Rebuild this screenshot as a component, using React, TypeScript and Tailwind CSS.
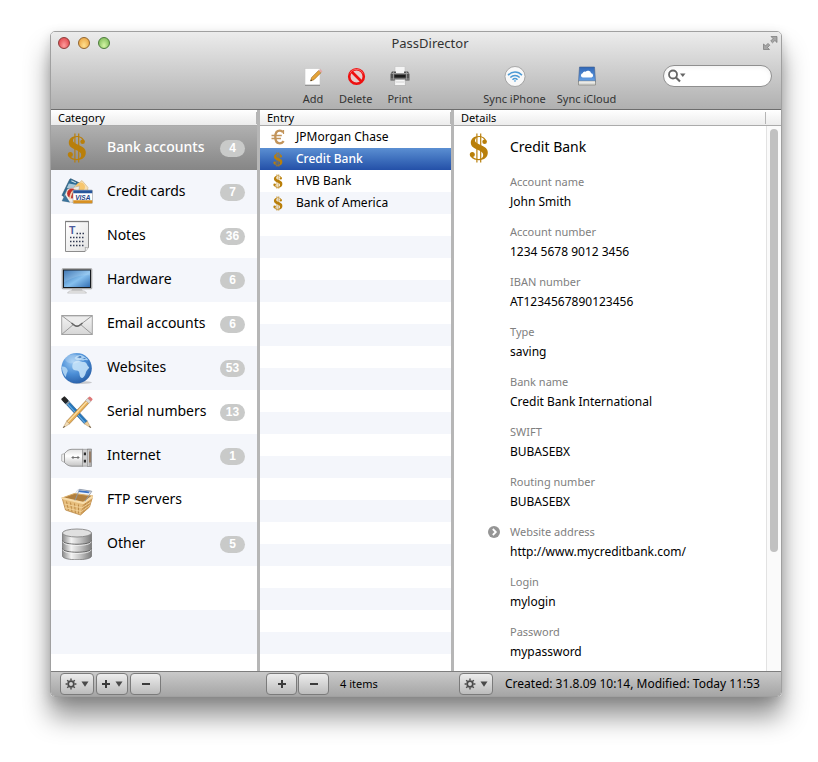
import { useState } from 'react';
import type { ReactNode } from 'react';

function DollarIcon({ className }: { className?: string }) {
  return (
    <svg viewBox="0 0 20 30" className={className} fill="#b97f0a" aria-hidden="true">
      <path d="M17.6 9C17 5.2 13.8 3 10 3 5.2 3 1.8 5.8 1.8 9.6c0 4 2.8 5.6 7.2 7.4 3.6 1.6 5.2 2.6 5.2 5s-1.800 4-4.600 4c-3 0-5.800-1.400-7-4H1.200c.8 3.400 4.200 5.200 8.600 5.200 5.600 0 9-3 9-7.400 0-4.200-2.800-6-7.200-7.800C7.600 10.400 6 9.600 6 7.600c0-2.200 1.800-3.500 4.200-3.500 2.800 0 4.800 1.500 5.800 3.900z" />
      <circle cx="15.600" cy="8.800" r="2.300" />
      <circle cx="3.300" cy="21.400" r="2.500" />
      <path d="M7.300 .5h1.200v29H7.300zM11.100 .5h1.200v29h-1.200z" />
    </svg>
  );
}

function EuroIcon({ className }: { className?: string }) {
  return (
    <svg viewBox="0 0 14 16" className={className} fill="none" stroke="#c2945a" aria-hidden="true">
      <path d="M12 3.400C11.200 2.200 10.200 1.700 8.800 1.700 5.800 1.700 4.300 4.300 4.300 8s1.500 6.300 4.500 6.300c1.600 0 2.900-.7 3.900-2.200" strokeWidth="2.300" />
      <path d="M.5 6.500h10.300M.5 9.500h9.500" strokeWidth="1.500" />
      <path d="M12.500 1v4" strokeWidth="1.200" />
    </svg>
  );
}

function CardsIcon() {
  return (
    <svg viewBox="0 0 32 32" className="size-8" aria-hidden="true">
      <g transform="rotate(26 12 15)">
        <rect x="4" y="5" width="13" height="19" rx="1" fill="#2f6d94" stroke="#1f4a68" strokeWidth=".6" />
        <path d="M5 10l11-3v4L5 15z" fill="#a9c7d8" />
        <path d="M6 6.500h5" stroke="#d5e4ec" strokeWidth="1" />
      </g>
      <path d="M13 11l8-6.500 6 7-1 6H13z" fill="#f6dfb4" stroke="#c9a05c" strokeWidth=".5" />
      <circle cx="19.500" cy="11" r="4.500" fill="#f7c66d" />
      <path d="M1 25l5.500-12 12-3-3 17z" fill="#f0ece6" stroke="#999" strokeWidth=".4" />
      <circle cx="11" cy="17.500" r="4.900" fill="#c3312b" />
      <path d="M9 23c.5-6 2-8.500 6-9.500" stroke="#f2d5b0" strokeWidth="1.800" fill="none" />
      <path d="M1 25l3-6.500 5 8z" fill="#3b739b" />
      <rect x="12" y="14" width="19.500" height="13.500" rx="1" fill="#fff" stroke="#8b8b8b" strokeWidth=".5" />
      <path d="M12.300 14.300h19v3h-19z" fill="#26559a" />
      <path d="M12.300 24.200h19v3h-19z" fill="#d79022" />
      <text x="21.800" y="23.500" textAnchor="middle" fontFamily="Liberation Sans, sans-serif" fontSize="6.500" fontWeight="700" fontStyle="italic" fill="#1d3f86">VISA</text>
    </svg>
  );
}

function NotesIcon() {
  return (
    <svg viewBox="0 0 32 32" className="size-8" aria-hidden="true">
      <defs>
        <linearGradient id="paper" x1="0" y1="0" x2="1" y2="1">
          <stop offset="0" stopColor="#fff" />
          <stop offset="1" stopColor="#e3e3e3" />
        </linearGradient>
      </defs>
      <path d="M4.500 1.500h23v26l-3.500 4H4.500z" fill="url(#paper)" stroke="#8c8c8c" />
      <path d="M24 31.500c.6-1.500.5-3 .2-4.200 1.200.6 2.400.6 3.300.2" fill="#fff" stroke="#8c8c8c" strokeWidth=".7" />
      <path d="M4.500 1.500h23" stroke="#6b6b6b" strokeWidth="1.500" strokeDasharray="1 1" />
      <text x="8" y="14" fontFamily="Liberation Sans, sans-serif" fontSize="10.500" fontWeight="700" fill="#4c5c9c">T</text>
      <g stroke="#323a52" strokeWidth="1.400" strokeDasharray="1.500 1.500">
        <path d="M15.500 13.500h8.500M9 17.500h15M9 21.500h15M9 25.500h15" />
      </g>
    </svg>
  );
}

function MonitorIcon() {
  return (
    <svg viewBox="0 0 32 32" className="size-8" aria-hidden="true">
      <defs>
        <linearGradient id="screen" x1="0" y1="0" x2="1" y2="1">
          <stop offset="0" stopColor="#2563a8" />
          <stop offset=".55" stopColor="#86c0ee" />
          <stop offset="1" stopColor="#3470b4" />
        </linearGradient>
      </defs>
      <path d="M11 25h10l1 2.500H10z" fill="#cfcfcf" />
      <path d="M6.500 29l2-2h15l2 2z" fill="#f1f1f1" stroke="#b5b5b5" strokeWidth=".7" />
      <rect x="1" y="4.500" width="30" height="20.500" rx="1" fill="#b8b8b8" stroke="#8e8e8e" strokeWidth=".5" />
      <rect x="2" y="5.500" width="28" height="18.500" fill="#171b20" />
      <rect x="3" y="6.500" width="26" height="16.500" fill="url(#screen)" />
      <path d="M3 6.500h26v5c-10-1-19 3-26 7z" fill="#fff" opacity=".14" />
    </svg>
  );
}

function MailIcon() {
  return (
    <svg viewBox="0 0 32 32" className="size-8" aria-hidden="true">
      <defs>
        <linearGradient id="envelope" x1="0" y1="0" x2="0" y2="1">
          <stop offset="0" stopColor="#f4f4f4" />
          <stop offset="1" stopColor="#d6d6d6" />
        </linearGradient>
      </defs>
      <rect x=".7" y="7.500" width="30.600" height="19" fill="url(#envelope)" stroke="#a3a3a3" />
      <path d="M1 26.200l11.500-9.800M31 26.200l-11.500-9.800" stroke="#9a9a9a" strokeWidth="1" />
      <path d="M1 7.800l12.500 9.500q2.500 1.700 5 0L31 7.800z" fill="#ececec" stroke="#9a9a9a" strokeWidth="1" />
      <path d="M10.500 15l3 2.300q2.500 1.700 5 0l3-2.300" stroke="#666" fill="none" strokeWidth="1.500" />
    </svg>
  );
}

function GlobeIcon() {
  return (
    <svg viewBox="0 0 32 32" className="size-8" aria-hidden="true">
      <defs>
        <radialGradient id="sea" cx=".38" cy=".28" r=".75">
          <stop offset="0" stopColor="#9ccaf3" />
          <stop offset=".55" stopColor="#4b8ed6" />
          <stop offset="1" stopColor="#2960a8" />
        </radialGradient>
      </defs>
      <ellipse cx="20" cy="30.500" rx="11" ry="1.500" fill="#000" opacity=".18" />
      <circle cx="15.600" cy="16.200" r="15.200" fill="url(#sea)" />
      <path d="M13 10c2-1.500 5-1.600 7-.6 2 .8 4 .2 5.200 1.600 1 1.700 1.600 3.600 3 4.300-.4 2-2.700 2.700-3.200 4.700-.4 2-1.700 5.400-3.600 6-2.100.4-2.700-2.100-2.900-4.200-.1-2-1-3.200-2.800-3.300-2.500 0-4.200-1.100-4.400-3.300-.1-2.100.2-3.800 1.700-5.200z" fill="#c3e1f8" opacity=".9" />
      <path d="M1 14.500c2-.4 3.700.5 4.700 2 1.300 1.600 1.300 3 .2 4.400-.7 1.300-.6 3.400-1.300 4.200C2.400 22.400.7 18.500 1 14.500z" fill="#b9dbf6" opacity=".85" />
      <path d="M13.500 6c1.500-2.200 4.200-3.300 6.500-3.100 2.700.9 5.300 2.600 7.200 5-1.500.6-3-.2-4.200.4-1.700.8-2.800-.6-4.200-.3-1.800.4-4.300.2-5.300-2z" fill="#b9dbf6" opacity=".85" />
      <path d="M16 5.300l3-1.200 1.800 1-2 1.200zM21 6.500l3-.6.8 1.200z" fill="#316eb5" />
      <ellipse cx="12" cy="7" rx="8" ry="4.500" fill="#fff" opacity=".2" />
    </svg>
  );
}

function PencilsIcon() {
  return (
    <svg viewBox="0 0 32 32" className="size-8" aria-hidden="true">
      <g transform="rotate(-43 16 17)">
        <path d="M14-1h4v31h-4z" fill="#2577bd" stroke="#184f80" strokeWidth=".5" />
        <path d="M15.300 3v27" stroke="#75b6e8" strokeWidth="1" />
        <path d="M14 30h4l-2 7.500z" fill="#efd09c" stroke="#a47b45" strokeWidth=".4" />
        <path d="M15.400 35.300h1.200L16 37.500z" fill="#333" />
        <rect x="13.600" y="-4" width="4.800" height="6.500" rx="1" fill="#262626" />
        <path d="M13.600 3.500h4.800" stroke="#999" strokeWidth="1.400" />
      </g>
      <g transform="rotate(43 16 17)">
        <path d="M14-1h4v31h-4z" fill="#e6ae55" stroke="#94662b" strokeWidth=".5" />
        <path d="M15.500 2v28" stroke="#fbdfa5" strokeWidth="1.300" />
        <path d="M14 30h4l-2 7.500z" fill="#f2ddb6" stroke="#a47b45" strokeWidth=".4" />
        <path d="M15.400 35.300h1.200L16 37.500z" fill="#333" />
        <rect x="13.700" y="-4" width="4.600" height="3.500" rx="1.200" fill="#df7878" />
        <rect x="13.700" y="-1" width="4.600" height="3" fill="#d9d9d9" stroke="#999" strokeWidth=".3" />
      </g>
    </svg>
  );
}

function PlugIcon() {
  return (
    <svg viewBox="0 0 32 32" className="size-8" aria-hidden="true">
      <defs>
        <linearGradient id="plug" x1="0" y1="0" x2="0" y2="1">
          <stop offset="0" stopColor="#e2e2e2" />
          <stop offset=".4" stopColor="#fff" />
          <stop offset="1" stopColor="#c4c4c4" />
        </linearGradient>
      </defs>
      <path d="M.7 14.500l3-1v9l-3-1.500z" fill="#eee" stroke="#aaa" strokeWidth=".8" />
      <path d="M3.500 13.500C6 10.500 8 9.300 11 9.300h11v16.900H11c-3 0-5-1.200-7.500-3.700z" fill="url(#plug)" stroke="#8f8f8f" strokeWidth=".9" />
      <path d="M21.500 9.300H27v16.900h-5.500z" fill="#cfcfcf" stroke="#8a8a8a" strokeWidth=".6" />
      <path d="M26.500 9h4v17.500h-4z" fill="#b0b0b0" stroke="#7c7c7c" strokeWidth=".6" />
      <path d="M27.200 10v16" stroke="#e6e6e6" strokeWidth=".8" />
      <path d="M28.200 11.500h1.600v11h-1.600z" fill="#8d6f55" />
      <path d="M22.800 12.500h2.200v2.800h-2.200zM22.800 19.800h2.200v2.800h-2.200z" fill="#2d2d2d" />
      <path d="M10.500 17.500h8M12 16v3M17 16v3" stroke="#686868" strokeWidth=".9" />
    </svg>
  );
}

function BasketIcon() {
  return (
    <svg viewBox="0 0 32 32" className="size-8" aria-hidden="true">
      <path d="M17 5.500l13 1.500-5 6-12-2z" fill="#f1f5fb" stroke="#b5bfd0" strokeWidth=".5" />
      <path d="M18 6.300l11 1.200-1.500 1.700-10-1.300z" fill="#3d73c4" />
      <path d="M1 14l12.500-4.500 18 2.500-9 6.500z" fill="#b07f3f" stroke="#d9ac66" strokeWidth="1" />
      <path d="M1 13.500l21.500 4.500 9.300-6L28.500 23 19.500 31 4.500 26z" fill="#e6bd7c" stroke="#b98847" strokeWidth=".8" />
      <path d="M22.500 18l-3 13 9-8 3.300-11z" fill="#cf9c57" />
      <path d="M1 14l21.500 5 9.300-6.500" stroke="#f7dcaa" strokeWidth="2.200" fill="none" />
      <path d="M5.500 17.500l2 9M9.500 18.500l1.500 9.500M13.500 19.500l.9 9.500M17.500 20.500v9M24.500 19l-2 8.500M27.300 17.500l-1.500 7.500" stroke="#bd8b47" strokeWidth="1" />
      <path d="M3.500 20l17.500 3.800 8.500-5.600M4 23.700l16.300 3.800 8.500-6" stroke="#f3d49c" strokeWidth=".9" fill="none" />
      <path d="M14 16.500L18.500 5.300l12.300 2-6.800 10" stroke="#8e98a8" strokeWidth=".9" fill="none" />
    </svg>
  );
}

function DatabaseIcon() {
  return (
    <svg viewBox="0 0 32 32" className="size-8" aria-hidden="true">
      <defs>
        <linearGradient id="drum">
          <stop offset="0" stopColor="#8b8b8b" />
          <stop offset=".3" stopColor="#f3f3f3" />
          <stop offset=".6" stopColor="#c6c6c6" />
          <stop offset="1" stopColor="#7c7c7c" />
        </linearGradient>
      </defs>
      <path d="M1.500 5v23c0 5 29 5 29 0V5z" fill="url(#drum)" stroke="#777" strokeWidth=".8" />
      <ellipse cx="16" cy="5" rx="14.500" ry="4" fill="#e0e0e0" stroke="#868686" strokeWidth=".9" />
      <path d="M1.500 12.500c0 5 29 5 29 0M1.500 20.500c0 5 29 5 29 0" fill="none" stroke="#696969" strokeWidth="1" />
      <path d="M2 13.700c0 5 28 5 28 0M2 21.700c0 5 28 5 28 0" fill="none" stroke="#f5f5f5" strokeWidth=".8" />
    </svg>
  );
}

function AddIcon() {
  return (
    <svg viewBox="0 0 22 22" className="size-[22px]" aria-hidden="true">
      <rect x="3" y="3.500" width="15" height="16.500" fill="#fff" stroke="#c5c5c5" strokeWidth=".6" />
      <path d="M3 20.300h15" stroke="#777" strokeWidth=".8" />
      <path d="M8.500 16l1.200-3.600 7-7 2.300 2.300-7 7z" fill="#e5a338" stroke="#976419" strokeWidth=".6" />
      <path d="M16.700 5.400l1.500-1.400 2.300 2.200L19 7.700z" fill="#e3a9a7" />
      <path d="M8.500 16l.5-1.600 1.100 1z" fill="#222" />
    </svg>
  );
}

function DeleteIcon() {
  return (
    <svg viewBox="0 0 22 22" className="size-[22px]" fill="none" stroke="#ee1010" strokeWidth="2.600" aria-hidden="true">
      <circle cx="11.500" cy="11.500" r="7.300" fill="#e6cccc" />
      <path d="M6.500 6.500l10 10" />
      <path d="M5 8.500C6.500 3.500 15.500 2.500 18 8.500" stroke="#ff8a8a" strokeWidth=".7" />
    </svg>
  );
}

function PrintIcon() {
  return (
    <svg viewBox="0 0 22 22" className="size-[22px]" aria-hidden="true">
      <path d="M6 1.500h10v7H6z" fill="#f4f4f4" stroke="#c2c2c2" strokeWidth=".6" />
      <path d="M1.500 9l1.500-2.500h4V9h8V6.500h4L20.500 9v6.500h-19z" fill="#555" />
      <path d="M2.500 8.500h17" stroke="#9a9a9a" strokeWidth="1" />
      <path d="M5.500 10h11v2.500h-11z" fill="#1c1c1c" />
      <path d="M1.500 14h19M4.500 6.500v8M17.500 6.500v8" stroke="#a3a3a3" strokeWidth=".8" />
      <path d="M6 14.500h10l.5 6h-11z" fill="#f6f6f6" stroke="#aaa" strokeWidth=".6" />
      <path d="M7 17h8" stroke="#c9c9c9" strokeWidth=".8" />
    </svg>
  );
}

function WifiIcon() {
  return (
    <svg viewBox="0 0 22 22" className="size-[22px]" fill="none" stroke="#4c9ad6" aria-hidden="true">
      <circle cx="11" cy="11.500" r="10" fill="#f8f8f8" stroke="#8f8f8f" strokeWidth=".7" />
      <path d="M4 10.200c4-4.300 10-4.300 14 0M6.300 12.500c2.800-2.800 6.600-2.800 9.400 0M8.500 14.700c1.500-1.500 3.500-1.500 5 0" strokeWidth="1.500" />
      <path d="M9.800 15.800L11 17l1.200-1.200q-1.200-.9-2.400 0z" fill="#4c9ad6" stroke="none" />
    </svg>
  );
}

function CloudIcon() {
  return (
    <svg viewBox="0 0 22 22" className="size-[22px]" aria-hidden="true">
      <defs>
        <linearGradient id="drive" x1="0" y1="0" x2="0" y2="1">
          <stop offset="0" stopColor="#2f66b6" />
          <stop offset="1" stopColor="#6aa5ea" />
        </linearGradient>
      </defs>
      <path d="M3.500 2h15l1 15H2.500z" fill="url(#drive)" stroke="#43608c" strokeWidth=".6" />
      <path d="M6.800 12.500a2.200 2.200 0 01-.2-4.300 2.500 2.500 0 013-1.500 3.300 3.300 0 015.500 1.500 2.200 2.200 0 01.4 4.300z" fill="#fff" />
      <path d="M2.500 16h17v4h-17z" fill="#dcdcd8" stroke="#75756f" strokeWidth=".6" />
      <path d="M3 17h16" stroke="#fff" strokeWidth=".8" />
    </svg>
  );
}

function GearIcon() {
  return (
    <svg viewBox="0 0 12 12" className="size-3" fill="none" stroke="#4a4a4a" aria-hidden="true">
      <circle cx="6" cy="6" r="2.800" strokeWidth="1.700" />
      <path d="M6 .6v2M6 9.400v2M.6 6h2M9.400 6h2M2.200 2.200l1.400 1.400M8.400 8.400l1.400 1.400M2.200 9.800l1.400-1.400M8.400 3.600l1.400-1.400" strokeWidth="1.400" />
    </svg>
  );
}

function PlusIcon() {
  return (
    <svg viewBox="0 0 10 10" className="size-[10px]" fill="#3c3c3c" aria-hidden="true">
      <path d="M4 1h2v3h3v2H6v3H4V6H1V4h3z" />
    </svg>
  );
}

function MinusIcon() {
  return (
    <svg viewBox="0 0 10 10" className="size-[10px]" fill="#3c3c3c" aria-hidden="true">
      <path d="M1 4h8v2H1z" />
    </svg>
  );
}

function Caret() {
  return (
    <svg viewBox="0 0 8 6" className="h-[6px] w-2" fill="#4a4a4a" aria-hidden="true">
      <path d="M.5 .5h7L4 5.800z" />
    </svg>
  );
}

function FullscreenIcon() {
  return (
    <svg viewBox="0 0 16 16" className="size-4" fill="#a6a6a6" stroke="#777" strokeWidth=".7" aria-hidden="true">
      <path d="M9 1.500h6V7.500l-2.100-2-2.400 2.300-1.800-1.800L11 3.600z" />
      <path d="M1.500 9v5.500h6l-2-2 2.300-2.300L6 8.400l-2.400 2.400z" />
    </svg>
  );
}

const categories: { name: string; count?: number; icon: ReactNode }[] = [
  { name: 'Bank accounts', count: 4, icon: <DollarIcon className="h-[30px] w-5" /> },
  { name: 'Credit cards', count: 7, icon: <CardsIcon /> },
  { name: 'Notes', count: 36, icon: <NotesIcon /> },
  { name: 'Hardware', count: 6, icon: <MonitorIcon /> },
  { name: 'Email accounts', count: 6, icon: <MailIcon /> },
  { name: 'Websites', count: 53, icon: <GlobeIcon /> },
  { name: 'Serial numbers', count: 13, icon: <PencilsIcon /> },
  { name: 'Internet', count: 1, icon: <PlugIcon /> },
  { name: 'FTP servers', icon: <BasketIcon /> },
  { name: 'Other', count: 5, icon: <DatabaseIcon /> },
];

const entries = [
  { name: 'JPMorgan Chase', euro: true },
  { name: 'Credit Bank', euro: false },
  { name: 'HVB Bank', euro: false },
  { name: 'Bank of America', euro: false },
];

const fields = [
  { label: 'Account name', value: 'John Smith' },
  { label: 'Account number', value: '1234 5678 9012 3456' },
  { label: 'IBAN number', value: 'AT1234567890123456' },
  { label: 'Type', value: 'saving' },
  { label: 'Bank name', value: 'Credit Bank International' },
  { label: 'SWIFT', value: 'BUBASEBX' },
  { label: 'Routing number', value: 'BUBASEBX' },
  { label: 'Website address', value: 'http://www.mycreditbank.com/', link: true },
  { label: 'Login', value: 'mylogin' },
  { label: 'Password', value: 'mypassword' },
];

function ToolbarButton({ label, icon }: { label: string; icon: ReactNode }) {
  return (
    <button className="flex flex-col items-center gap-1 text-[11px] leading-4 text-[#333]">
      {icon}
      <span className="whitespace-nowrap">{label}</span>
    </button>
  );
}

function FooterButton({ label, children }: { label: string; children: ReactNode }) {
  return (
    <button
      aria-label={label}
      className="flex h-[22px] min-w-[31px] items-center justify-center gap-1 rounded-[4px] border border-[#7b7b7b] bg-linear-to-b from-[#ededed] to-[#bcbcbc] px-1"
    >
      {children}
    </button>
  );
}

function ColumnHeader({ children, inset }: { children: ReactNode; inset?: boolean }) {
  return (
    <div className="flex h-4 shrink-0 items-center border-b border-[#ababab] bg-linear-to-b from-white to-[#ececec] pl-[7px]">
      <h2 className="flex-1 text-[11px] leading-[13px]">{children}</h2>
      <span className={inset ? 'mr-[15px] h-3 w-px bg-[#b5b5b5]' : 'h-3 w-px bg-[#b5b5b5]'} />
    </div>
  );
}

export default function App() {
  const [category, setCategory] = useState('Bank accounts');
  const [entry, setEntry] = useState('Credit Bank');
  const [search, setSearch] = useState('');

  return (
    <div className="min-h-screen bg-white pt-[31px] pr-[36px] pb-[65px] pl-[50px] font-['Noto_Sans','Open_Sans',sans-serif] text-black">
      <main className="flex flex-col overflow-hidden rounded-[5px] border border-[#a0a0a0] shadow-[0_20px_26px_rgba(0,0,0,0.42),0_4px_12px_rgba(0,0,0,0.15)]">
        <header className="h-[78px] border-b border-[#6d6d6d] bg-linear-to-b from-[#ececec] to-[#b0b0b0]">
          <div className="flex h-[22px] items-center pr-[3px] pl-[7px]">
            <div className="flex gap-2">
              <button aria-label="Close" className="size-3 rounded-full border border-[#8c3a38] bg-radial-[at_50%_75%] from-[#ff9d9d] to-[#d9353b]" />
              <button aria-label="Minimize" className="size-3 rounded-full border border-[#91642d] bg-radial-[at_50%_75%] from-[#ffe08f] to-[#e69a35]" />
              <button aria-label="Zoom" className="size-3 rounded-full border border-[#4b7a3a] bg-radial-[at_50%_75%] from-[#d5f5a5] to-[#6fb14d]" />
            </div>
            <h1 className="flex-1 pr-3 text-center text-[13px] leading-5 text-[#333]">PassDirector</h1>
            <button aria-label="Full screen">
              <FullscreenIcon />
            </button>
          </div>
          <div className="flex items-start pt-[11px] pr-[9px] pl-[251px]">
            <div className="flex gap-[15px]">
              <ToolbarButton label="Add" icon={<AddIcon />} />
              <ToolbarButton label="Delete" icon={<DeleteIcon />} />
              <ToolbarButton label="Print" icon={<PrintIcon />} />
            </div>
            <div className="ml-[71px] flex gap-[11px]">
              <ToolbarButton label="Sync iPhone" icon={<WifiIcon />} />
              <ToolbarButton label="Sync iCloud" icon={<CloudIcon />} />
            </div>
            <label className="ml-auto flex h-[22px] w-[109px] items-center rounded-full border border-[#8f8f8f] bg-white pr-2 pl-1 inset-shadow-sm">
              <svg viewBox="0 0 18 14" className="h-[14px] w-[18px] shrink-0" fill="none" stroke="#666" aria-hidden="true">
                <circle cx="5" cy="5.500" r="4" strokeWidth="1.800" />
                <path d="M8 8.500l4 4" strokeWidth="2.200" />
                <path d="M12 4.500h5.500L14.800 8z" fill="#666" stroke="none" />
              </svg>
              <input
                type="search"
                aria-label="Search"
                value={search}
                onChange={(e) => setSearch(e.target.value)}
                className="min-w-0 flex-1 bg-transparent text-[11px] outline-none"
              />
            </label>
          </div>
        </header>

        <div className="flex">
          <section className="flex w-[209px] shrink-0 flex-col border-r-3 border-[#b6b6b6]">
            <ColumnHeader>Category</ColumnHeader>
            <ul className="flex-1 bg-[repeating-linear-gradient(to_bottom,#fff_0_44px,#f4f6fb_44px_88px)]">
              {categories.map((c) => {
                const selected = c.name === category;
                return (
                  <li key={c.name}>
                    <button
                      onClick={() => setCategory(c.name)}
                      className={`flex h-11 w-full items-center pr-3 pl-[10px] text-left ${
                        selected ? 'bg-linear-to-b from-[#b0b0b0] to-[#868686] text-white' : ''
                      }`}
                    >
                      <span className="flex w-8 shrink-0 justify-center">{c.icon}</span>
                      <span className={`ml-[14px] flex-1 pb-[2px] whitespace-nowrap text-sm leading-5 ${selected ? 'font-medium' : ''}`}>{c.name}</span>
                      {c.count && (
                        <span className="w-[25px] rounded-full bg-[#c9cac9] text-center font-['Liberation_Sans',sans-serif] text-xs leading-[17px] font-bold text-white">
                          {c.count}
                        </span>
                      )}
                    </button>
                  </li>
                );
              })}
            </ul>
          </section>

          <section className="flex w-[194px] shrink-0 flex-col border-r-3 border-[#b6b6b6]">
            <ColumnHeader>Entry</ColumnHeader>
            <ul className="flex-1 bg-[repeating-linear-gradient(to_bottom,#fff_0_22px,#f4f6fb_22px_44px)]">
              {entries.map((e) => {
                const selected = e.name === entry;
                return (
                  <li key={e.name}>
                    <button
                      onClick={() => setEntry(e.name)}
                      className={`flex h-[22px] w-full items-center gap-[11px] pl-[11px] text-left text-xs ${
                        selected ? 'bg-linear-to-b from-[#5b8fd2] to-[#2450a8] font-medium text-white' : ''
                      }`}
                    >
                      <span className="flex w-[14px] justify-center">
                        {e.euro ? <EuroIcon className="h-4 w-[14px]" /> : <DollarIcon className="h-[15px] w-[10px]" />}
                      </span>
                      {e.name}
                    </button>
                  </li>
                );
              })}
            </ul>
          </section>

          <section className="flex min-w-0 flex-1 flex-col">
            <ColumnHeader inset>Details</ColumnHeader>
            <div className="flex flex-1 bg-white">
              <div className="min-w-0 flex-1 pb-px">
                <div className="flex h-11 items-center pl-[15px]">
                  <DollarIcon className="h-[30px] w-5" />
                  <h3 className="ml-[21px] pb-[2px] text-sm leading-5">Credit Bank</h3>
                </div>
                <dl>
                  {fields.map((f) => (
                    <div key={f.label} className="h-[50px] pt-[2px] pl-14">
                      <dt className="flex items-center text-[11px] leading-5 text-[#808080]">
                        {f.link && (
                          <a href={f.value} aria-label="Open website" className="-ml-[22px] mr-[10px]">
                            <svg viewBox="0 0 12 12" className="size-3" fill="none" aria-hidden="true">
                              <circle cx="6" cy="6" r="6" fill="#959595" />
                              <path d="M4.800 3l3 3-3 3" stroke="#fff" strokeWidth="1.800" />
                            </svg>
                          </a>
                        )}
                        {f.label}
                      </dt>
                      <dd className="text-xs leading-5">{f.value}</dd>
                    </div>
                  ))}
                </dl>
              </div>
              <div className="w-[15px] shrink-0 border-l border-[#e2e2e2] bg-[#fafafa] pt-[3px] pl-[3px]">
                <div className="h-[78%] w-2 rounded-full bg-[#c1c1c1]" />
              </div>
            </div>
          </section>
        </div>

        <footer className="flex h-[25px] items-center border-t border-[#7d7d7d] bg-linear-to-b from-[#c9c9c9] to-[#a5a5a5] text-[11px]">
          <div className="flex w-[209px] shrink-0 gap-[2px] pl-[9px]">
            <FooterButton label="Category actions">
              <GearIcon />
              <Caret />
            </FooterButton>
            <FooterButton label="Add category">
              <PlusIcon />
              <Caret />
            </FooterButton>
            <FooterButton label="Remove category">
              <MinusIcon />
            </FooterButton>
          </div>
          <div className="flex w-[194px] shrink-0 items-center gap-px pl-[6px]">
            <FooterButton label="Add entry">
              <PlusIcon />
            </FooterButton>
            <FooterButton label="Remove entry">
              <MinusIcon />
            </FooterButton>
            <span className="ml-[10px]">4 items</span>
          </div>
          <div className="flex min-w-0 flex-1 items-center pl-[5px]">
            <FooterButton label="Entry actions">
              <GearIcon />
              <Caret />
            </FooterButton>
            <span className="ml-3 whitespace-nowrap text-xs">Created: 31.8.09 10:14, Modified: Today 11:53</span>
          </div>
        </footer>
      </main>
    </div>
  );
}
